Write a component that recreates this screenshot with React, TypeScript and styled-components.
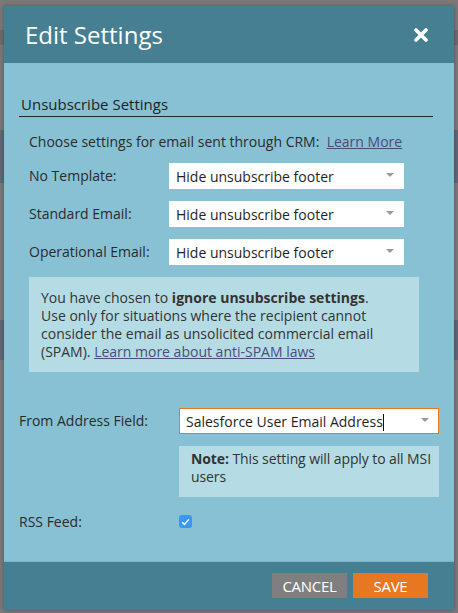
import React from "react";
import styled, { createGlobalStyle } from "styled-components";

const Global = createGlobalStyle`
  html, body { margin: 0; padding: 0; }
  body {
    width: 458px;
    height: 613px;
    overflow: hidden;
    font-family: "Open Sans", "DejaVu Sans", sans-serif;
    background: #7b787a;
  }
`;

const Backdrop = styled.div`
  width: 458px;
  height: 613px;
  box-sizing: border-box;
  padding: 6px 4px 3px 4px;
  background:
    linear-gradient(to bottom, transparent 0, transparent 30px, #6c6a6c 30px, #6c6a6c 45px, transparent 45px),
    linear-gradient(to bottom, transparent 130px, #5c6874 130px, #5c6874 183px, transparent 183px),
    linear-gradient(to bottom, transparent 320px, #5c6874 320px, #5c6874 360px, transparent 360px),
    #7b787a;
`;

const Dialog = styled.div`
  width: 450px;
  height: 604px;
  display: flex;
  flex-direction: column;
  background: #87c1d3;
  box-shadow: 0 0 4px rgba(0, 0, 0, 0.3);
`;

const Header = styled.div`
  height: 57px;
  flex: none;
  background: #457f91;
  display: flex;
  align-items: center;
  justify-content: space-between;
  padding: 0 26px 0 21px;
`;

const Title = styled.h1`
  margin: 0;
  font-size: 24px;
  font-weight: 400;
  color: #ffffff;
`;

const Close = styled.button`
  border: none;
  background: none;
  padding: 0;
  width: 14px;
  height: 14px;
  display: flex;
  cursor: pointer;
`;

const Body = styled.div`
  flex: 1;
  padding: 31px 15px 0 15px;
  color: #2b2b2b;
  font-size: 14px;
`;

const SectionTitle = styled.div`
  margin-right: 6px;
  padding: 0 0 2px 2px;
  font-size: 15px;
  line-height: 20px;
  color: #1f1f1f;
  border-bottom: 1px solid #1e2a2e;
`;

const Section = styled.div`
  padding: 14px 20px 0 10px;
`;

const Intro = styled.div`
  line-height: 22px;
  margin-bottom: 10px;
  white-space: nowrap;
`;

const Link = styled.a`
  color: #4b4b7c;
  text-decoration: underline;
`;

const Grid = styled.div<{ $label: number }>`
  display: grid;
  grid-template-columns: ${(p) => p.$label}px 1fr;
  row-gap: 12px;
  align-items: center;
`;

const Label = styled.div`
  line-height: 20px;
`;

const SelectBox = styled.div<{ $focus?: boolean; $w: number }>`
  width: ${(p) => p.$w}px;
  height: 26px;
  box-sizing: border-box;
  background: #ffffff;
  border: ${(p) => (p.$focus ? "1px solid #e87722" : "none")};
  display: flex;
  align-items: center;
  justify-content: space-between;
  padding: 0 ${(p) => (p.$focus ? 9 : 10)}px 0 ${(p) => (p.$focus ? 6 : 7)}px;
  color: #1f1f1f;
  font-size: 14px;
`;

const Caret = styled.span`
  width: 0;
  height: 0;
  border-left: 4px solid transparent;
  border-right: 4px solid transparent;
  border-top: 4px solid #9a9a9a;
  margin-top: -2px;
`;

const Cursor = styled.span`
  display: inline-block;
  width: 1px;
  height: 17px;
  background: #111;
  vertical-align: -4px;
`;

const Notice = styled.div`
  margin-top: 12px;
  background: #b5dce5;
  padding: 12px 39px 11px 12px;
  line-height: 18px;
  color: #333;
`;

const FieldGrid = styled.div`
  margin-top: 36px;
  display: grid;
  grid-template-columns: 160px 260px;
  align-items: center;
`;

const NoteBox = styled.div`
  grid-column: 2;
  margin-top: 12px;
  background: #b5dce5;
  padding: 4px 2px 11px 12px;
  line-height: 18px;
  color: #333;
  letter-spacing: -0.1px;
`;

const RssLabel = styled.div`
  margin-top: 18px;
  line-height: 13px;
`;

const Check = styled.span`
  margin-top: 18px;
  width: 13px;
  height: 13px;
  border-radius: 3px;
  background: #3d95f7;
  display: flex;
  align-items: center;
  justify-content: center;
`;

const Footer = styled.div`
  height: 49px;
  flex: none;
  background: #457f91;
  border-top: 1px solid #7cb5c6;
  box-sizing: border-box;
  display: flex;
  justify-content: flex-end;
  align-items: flex-start;
  gap: 6px;
  padding: 11px 26px 0 0;
`;

const Button = styled.button<{ $primary?: boolean }>`
  width: 75px;
  height: 25px;
  border: none;
  padding: 0;
  background: ${(p) => (p.$primary ? "#e87722" : "#7f7f7f")};
  color: #ffffff;
  font-family: "Open Sans", sans-serif;
  font-size: 15px;
  text-transform: uppercase;
  letter-spacing: -0.3px;
  cursor: pointer;
`;

const Select = ({ value, w, focus }: { value: React.ReactNode; w: number; focus?: boolean }) => (
  <SelectBox $w={w} $focus={focus}>
    <span>{value}</span>
    <Caret />
  </SelectBox>
);

export default function App() {
  return (
    <>
      <Global />
      <Backdrop>
        <Dialog>
          <Header>
            <Title>Edit Settings</Title>
            <Close aria-label="Close">
              <svg width="14" height="14" viewBox="0 0 14 14">
                <path d="M2 2 L12 12 M12 2 L2 12" stroke="#fff" strokeWidth="3.6" strokeLinecap="round" />
              </svg>
            </Close>
          </Header>
          <Body>
            <SectionTitle>Unsubscribe Settings</SectionTitle>
            <Section>
              <Intro>
                Choose settings for email sent through CRM:&nbsp; <Link href="#">Learn More</Link>
              </Intro>
              <Grid $label={140}>
                <Label>No Template:</Label>
                <Select w={235} value="Hide unsubscribe footer" />
                <Label>Standard Email:</Label>
                <Select w={235} value="Hide unsubscribe footer" />
                <Label>Operational Email:</Label>
                <Select w={235} value="Hide unsubscribe footer" />
              </Grid>
              <Notice>
                You have chosen to <b>ignore unsubscribe settings</b>. Use only for situations where the
                recipient cannot consider the email as unsolicited commercial email (SPAM).{" "}
                <Link href="#">Learn more about anti-SPAM laws</Link>
              </Notice>
            </Section>
            <FieldGrid>
              <Label>From Address Field:</Label>
              <Select
                w={260}
                focus
                value={
                  <>
                    Salesforce User Email Address
                    <Cursor />
                  </>
                }
              />
              <NoteBox>
                <b>Note:</b> This setting will apply to all MSI users
              </NoteBox>
              <RssLabel>RSS Feed:</RssLabel>
              <Check>
                <svg width="9" height="8" viewBox="0 0 9 8">
                  <path d="M1.2 4.2 L3.5 6.4 L7.8 1.4" stroke="#fff" strokeWidth="1.4" fill="none" />
                </svg>
              </Check>
            </FieldGrid>
          </Body>
          <Footer>
            <Button>Cancel</Button>
            <Button $primary>Save</Button>
          </Footer>
        </Dialog>
      </Backdrop>
    </>
  );
}
